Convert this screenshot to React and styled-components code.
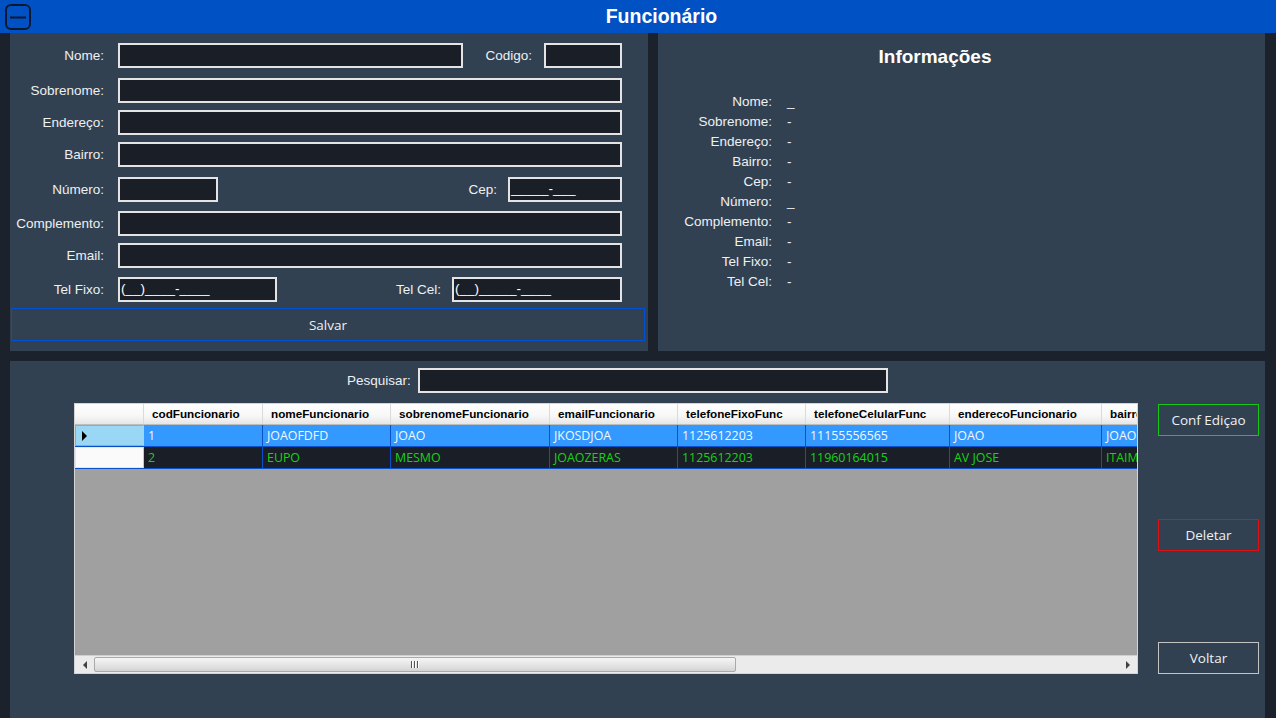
import React from 'react'
import styled, { createGlobalStyle } from 'styled-components'

const GlobalStyle = createGlobalStyle`
  html, body {
    margin: 0;
    padding: 0;
    overflow: hidden;
    background: #1b222b;
  }
  body {
    font-family: "Liberation Sans", Arial, sans-serif;
  }
  * { box-sizing: border-box; }
`

const Window = styled.div`
  width: 1276px;
  height: 718px;
  display: flex;
  flex-direction: column;
  background: #1b222b;
`

const TitleBar = styled.div`
  height: 33px;
  flex-shrink: 0;
  background: #0051c4;
  display: flex;
  align-items: center;
  padding-left: 5px;
`

const MinButton = styled.div`
  width: 26px;
  height: 26px;
  display: flex;
`

const TitleText = styled.div`
  flex: 1;
  text-align: center;
  padding-left: 16px;
  color: #fff;
  font-weight: bold;
  font-size: 19.5px;
`

const TopArea = styled.div`
  display: flex;
  gap: 10px;
  height: 318px;
  padding: 0 11px 0 10px;
`

const Panel = styled.div`
  background: #324151;
`

const FormPanel = styled(Panel)`
  width: 638px;
  padding-top: 10px;
  display: flex;
  flex-direction: column;
`

const InfoPanel = styled(Panel)`
  flex: 1;
  padding-top: 13px;
  display: flex;
  flex-direction: column;
`

const Row = styled.div`
  display: flex;
  align-items: center;
  height: 25px;
  padding-right: 26px;
  margin-top: ${p => p.$top || 0}px;
`

const Label = styled.label`
  color: #eef0f2;
  font-size: 13.5px;
  white-space: nowrap;
  ${p => p.$main ? 'width: 94px; text-align: right;' : ''}
  margin-right: ${p => p.$gap ?? 14}px;
`

const Group = styled.div`
  margin-left: auto;
  display: flex;
  align-items: center;
  height: 100%;
`

const Input = styled.div`
  height: 25px;
  ${p => p.$w ? `width: ${p.$w}px;` : 'flex: 1;'}
  flex-shrink: 0;
  background: #1a1f27;
  border: 2px solid #e4e4e4;
  color: #fff;
  font-size: 13.5px;
  line-height: 19px;
  padding-left: 1px;
  white-space: pre;
  overflow: hidden;
`

const SaveButton = styled.div`
  margin: 6px 3px 0 1px;
  height: 33px;
  border: 1px solid #0050d0;
  color: #eef0f2;
  font-family: "Open Sans", "Noto Sans", sans-serif;
  font-size: 13.5px;
  display: flex;
  align-items: center;
  justify-content: center;
`

const InfoTitle = styled.div`
  text-align: center;
  padding-right: 53px;
  color: #fff;
  font-weight: bold;
  font-size: 19px;
  line-height: 22px;
`

const InfoList = styled.div`
  margin-top: 23px;
  display: grid;
  grid-template-columns: 114px auto;
  grid-auto-rows: 20px;
  column-gap: 15px;
  align-items: center;
  color: #eef0f2;
  font-size: 13.5px;
`

const InfoLabel = styled.div`
  text-align: right;
`

const BottomPanel = styled(Panel)`
  flex: 1;
  margin: 10px 11px 0 10px;
  padding-top: 7px;
  display: flex;
  flex-direction: column;
`

const SearchRow = styled.div`
  display: flex;
  align-items: center;
  height: 25px;
  padding-left: 337px;
`

const Content = styled.div`
  display: flex;
  margin-top: 10px;
  padding-left: 64px;
`

const Grid = styled.div`
  width: 1064px;
  height: 271px;
  background: #a0a0a0;
  border: 1px solid #d4d4d4;
  display: flex;
  flex-direction: column;
  overflow: hidden;
`

const HeadRow = styled.div`
  display: flex;
  height: 21px;
  flex-shrink: 0;
  background: linear-gradient(#ffffff, #f7f7f7 60%, #e6e6e6);
  border-bottom: 1px solid #bdbdbd;
`

const HeadCell = styled.div`
  width: ${p => p.$w}px;
  flex-shrink: 0;
  padding-left: 8px;
  font-weight: bold;
  font-size: 11.7px;
  line-height: 20px;
  color: #000;
  border-right: 1px solid #dadada;
  white-space: nowrap;
  overflow: hidden;
`

const DataRow = styled.div`
  display: flex;
  height: 22px;
  flex-shrink: 0;
  background: ${p => p.$selected ? '#3399ff' : '#1a1f27'};
  color: ${p => p.$selected ? '#f4f8ff' : '#14d414'};
  border-bottom: 1px solid #0a50c8;
`

const RowHead = styled.div`
  width: 69px;
  flex-shrink: 0;
  background: ${p => p.$selected ? '#99d7f5' : '#fafafa'};
  border: 1px solid ${p => p.$selected ? '#6fb6dc' : '#e6e6e6'};
  border-right-color: #c8c8c8;
  display: flex;
  align-items: center;
  padding-left: 6px;
`

const Arrow = styled.span`
  width: 0;
  height: 0;
  border-top: 5px solid transparent;
  border-bottom: 5px solid transparent;
  border-left: 5px solid #000;
`

const Cell = styled.div`
  width: ${p => p.$w}px;
  flex-shrink: 0;
  padding-left: 4px;
  font-family: "Open Sans", "Noto Sans", sans-serif;
  font-size: 12.4px;
  line-height: 21px;
  border-right: 1px solid #0a50c8;
  white-space: nowrap;
  overflow: hidden;
`

const Scrollbar = styled.div`
  margin-top: auto;
  height: 18px;
  flex-shrink: 0;
  background: #ebebeb;
  border-top: 1px solid #cfcfcf;
  display: flex;
  align-items: center;
`

const ArrowBox = styled.div`
  width: 19px;
  height: 100%;
  display: flex;
  align-items: center;
  justify-content: center;
  flex-shrink: 0;
`

const SmallTri = styled.span`
  width: 0;
  height: 0;
  border-top: 4px solid transparent;
  border-bottom: 4px solid transparent;
  ${p => p.$dir === 'left'
    ? 'border-right: 4px solid #404040;'
    : 'border-left: 4px solid #404040;'}
`

const Track = styled.div`
  flex: 1;
  height: 100%;
  display: flex;
  align-items: center;
`

const Thumb = styled.div`
  width: 642px;
  height: 15px;
  border: 1px solid #a9a9a9;
  border-radius: 2px;
  background: linear-gradient(#f5f5f5, #e6e6e6 50%, #d4d4d4);
  display: flex;
  align-items: center;
  justify-content: center;
  gap: 1px;
`

const Grip = styled.span`
  width: 1px;
  height: 7px;
  background: #555;
  box-shadow: 1px 0 0 #fff;
  margin-right: 1px;
`

const Actions = styled.div`
  margin-left: 20px;
  width: 101px;
  height: 271px;
  display: flex;
  flex-direction: column;
  justify-content: space-between;
  padding-top: 1px;
`

const ActionButton = styled.div`
  height: 32px;
  border: 1px solid ${p => p.$color};
  color: #eef0f2;
  font-family: "Open Sans", "Noto Sans", sans-serif;
  font-size: 13.5px;
  white-space: nowrap;
  display: flex;
  align-items: center;
  justify-content: center;
  margin-top: ${p => p.$shift || 0}px;
`

const columns = [
  ['codFuncionario', 119],
  ['nomeFuncionario', 128],
  ['sobrenomeFuncionario', 159],
  ['emailFuncionario', 128],
  ['telefoneFixoFunc', 128],
  ['telefoneCelularFunc', 144],
  ['enderecoFuncionario', 152],
  ['bairroFuncionario', 140],
]

const rows = [
  ['1', 'JOAOFDFD', 'JOAO', 'JKOSDJOA', '1125612203', '11155556565', 'JOAO', 'JOAO'],
  ['2', 'EUPO', 'MESMO', 'JOAOZERAS', '1125612203', '11960164015', 'AV JOSE', 'ITAIM'],
]

const info = [
  ['Nome:', '_'],
  ['Sobrenome:', '-'],
  ['Endereço:', '-'],
  ['Bairro:', '-'],
  ['Cep:', '-'],
  ['Número:', '_'],
  ['Complemento:', '-'],
  ['Email:', '-'],
  ['Tel Fixo:', '-'],
  ['Tel Cel:', '-'],
]

export default function App() {
  return (
    <Window>
      <GlobalStyle />
      <TitleBar>
        <MinButton>
          <svg width="26" height="26" viewBox="0 0 26 26">
            <rect x="1" y="1" width="24" height="24" rx="5" fill="none" stroke="#0b1830" strokeWidth="2" />
            <line x1="5" y1="13.5" x2="21" y2="13.5" stroke="#0b1830" strokeWidth="2" />
          </svg>
        </MinButton>
        <TitleText>Funcionário</TitleText>
      </TitleBar>

      <TopArea>
        <FormPanel>
          <Row>
            <Label $main>Nome:</Label>
            <Input $w={345} />
            <Group>
              <Label $gap={12}>Codigo:</Label>
              <Input $w={78} />
            </Group>
          </Row>
          <Row $top={10}>
            <Label $main>Sobrenome:</Label>
            <Input />
          </Row>
          <Row $top={7}>
            <Label $main>Endereço:</Label>
            <Input />
          </Row>
          <Row $top={7}>
            <Label $main>Bairro:</Label>
            <Input />
          </Row>
          <Row $top={10}>
            <Label $main>Número:</Label>
            <Input $w={100} />
            <Group>
              <Label $gap={11}>Cep:</Label>
              <Input $w={114}>_____-___</Input>
            </Group>
          </Row>
          <Row $top={9}>
            <Label $main>Complemento:</Label>
            <Input />
          </Row>
          <Row $top={7}>
            <Label $main>Email:</Label>
            <Input />
          </Row>
          <Row $top={9}>
            <Label $main>Tel Fixo:</Label>
            <Input $w={159}>(__)____-____</Input>
            <Group>
              <Label $gap={11}>Tel Cel:</Label>
              <Input $w={170}>(__)_____-____</Input>
            </Group>
          </Row>
          <SaveButton>Salvar</SaveButton>
        </FormPanel>

        <InfoPanel>
          <InfoTitle>Informações</InfoTitle>
          <InfoList>
            {info.map(([label, value]) => (
              <React.Fragment key={label}>
                <InfoLabel>{label}</InfoLabel>
                <div>{value}</div>
              </React.Fragment>
            ))}
          </InfoList>
        </InfoPanel>
      </TopArea>

      <BottomPanel>
        <SearchRow>
          <Label $gap={7}>Pesquisar:</Label>
          <Input $w={470} />
        </SearchRow>
        <Content>
          <Grid>
            <HeadRow>
              <HeadCell $w={69} />
              {columns.map(([name, w]) => (
                <HeadCell key={name} $w={w}>{name}</HeadCell>
              ))}
            </HeadRow>
            {rows.map((row, i) => (
              <DataRow key={i} $selected={i === 0}>
                <RowHead $selected={i === 0}>{i === 0 && <Arrow />}</RowHead>
                {row.map((value, j) => (
                  <Cell key={j} $w={columns[j][1]}>{value}</Cell>
                ))}
              </DataRow>
            ))}
            <Scrollbar>
              <ArrowBox><SmallTri $dir="left" /></ArrowBox>
              <Track>
                <Thumb>
                  <Grip /><Grip /><Grip />
                </Thumb>
              </Track>
              <ArrowBox><SmallTri $dir="right" /></ArrowBox>
            </Scrollbar>
          </Grid>
          <Actions>
            <ActionButton $color="#14c814">Conf Ediçao</ActionButton>
            <ActionButton $color="#e01010" $shift={-8}>Deletar</ActionButton>
            <ActionButton $color="#c4c4c4">Voltar</ActionButton>
          </Actions>
        </Content>
      </BottomPanel>
    </Window>
  )
}
